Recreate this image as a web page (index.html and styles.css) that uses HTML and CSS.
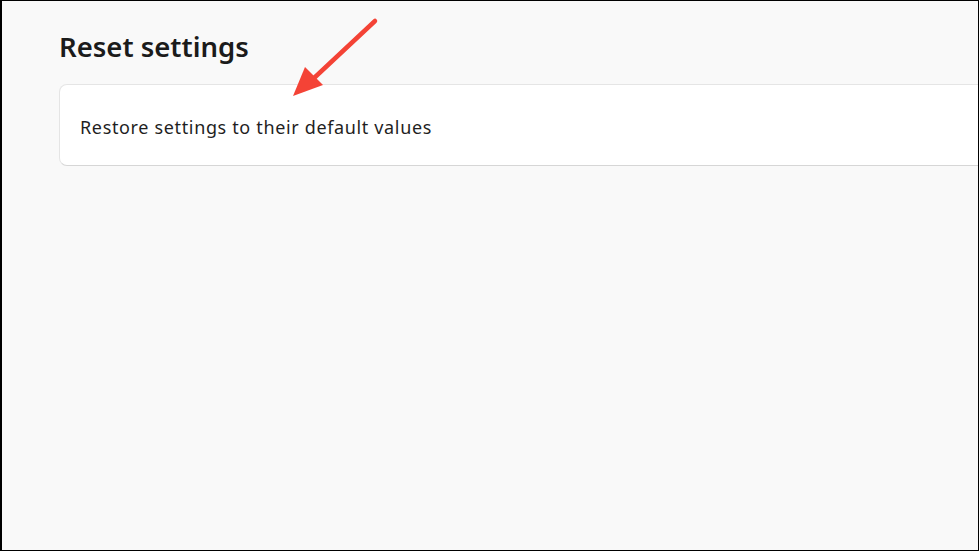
FILE: index.html
```html
<!DOCTYPE html>
<html>
<head>
<meta charset="utf-8">
<link rel="stylesheet" href="styles.css">
</head>
<body>
<div class="frame">
  <main class="page">
    <h1 class="title">Reset settings</h1>
    <div class="card">
      <span class="card-text">Restore settings to their default values</span>
    </div>
  </main>
  <svg class="arrow" width="979" height="551" viewBox="0 0 979 551">
    <line x1="375" y1="21" x2="313" y2="79" stroke="#f44336" stroke-width="4.5" stroke-linecap="round"/>
    <polygon points="293,96 305,67 323,85" fill="#f44336"/>
  </svg>
</div>
</body>
</html>
```
FILE: styles.css
```css
html, body {
  margin: 0;
  padding: 0;
  width: 979px;
  height: 551px;
  overflow: hidden;
  background: #000;
}
.frame {
  position: relative;
  box-sizing: border-box;
  width: 979px;
  height: 551px;
  border-style: solid;
  border-color: #000;
  border-width: 1px 1px 1px 2px;
  background: #f9f9f9;
  overflow: hidden;
}
.page {
  padding: 26px 0 0 57px;
  font-family: "Noto Sans", sans-serif;
  color: #1b1b1b;
}
.title {
  margin: 0;
  font-size: 27.5px;
  font-weight: 600;
  line-height: 40px;
  height: 40px;
}
.card {
  margin-top: 17px;
  box-sizing: border-box;
  width: 960px;
  height: 82px;
  background: #fff;
  border: 1px solid #e5e5e5;
  border-bottom-color: #d6d6d6;
  border-radius: 8px;
  display: flex;
  align-items: center;
  padding: 3px 0 0 20px;
}
.card-text {
  font-size: 18px;
  letter-spacing: 0.65px;
  color: #1f1f1f;
}
.arrow {
  position: absolute;
  left: -2px;
  top: -1px;
  pointer-events: none;
}
```
